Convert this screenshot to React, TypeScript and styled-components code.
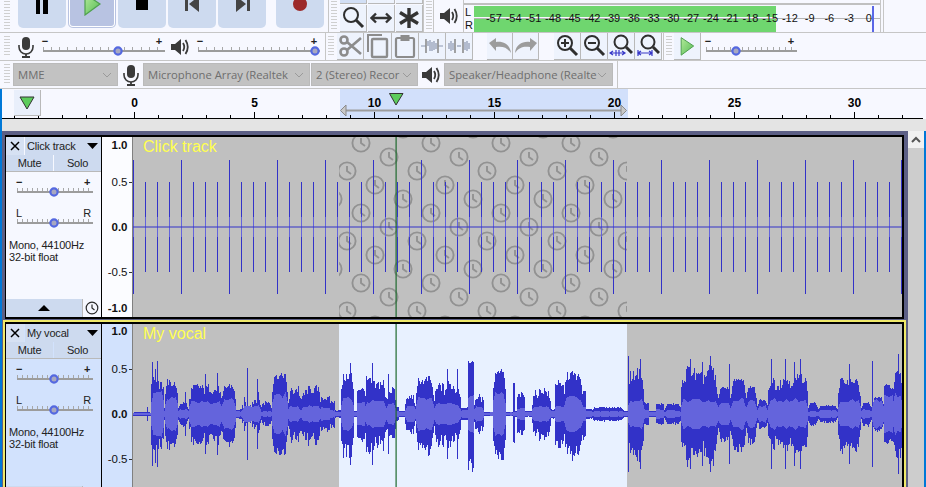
import * as React from 'react'
import styled, { createGlobalStyle } from 'styled-components'

const Global = createGlobalStyle`
	html, body {
		margin: 0;
		height: 487px;
		overflow: hidden;
		background: #f7f8ff;
		font-family: 'Liberation Sans', Arial, sans-serif;
	}
	svg { display: block; }
`

// the screenshot cuts off the top of the window, so the first toolbar row starts above the page
const Shell = styled.div`
	width: 926px;
	height: 507px;
	margin-top: -20px;
	overflow: hidden;
	display: flex;
	flex-direction: column;
`

const ToolRow = styled.div<{ $height: number }>`
	box-sizing: border-box;
	height: ${p => p.$height}px;
	flex: none;
	display: flex;
	align-items: center;
	background: #f7f8ff;
	border-bottom: 1px solid #c6c6c6;
`

const Grip = styled.div<{ $left?: number; $right?: number }>`
	flex: none;
	width: 6px;
	height: 100%;
	margin-left: ${p => p.$left ?? 0}px;
	margin-right: ${p => p.$right ?? 0}px;
	background: repeating-linear-gradient(to bottom, #cfcfcf 0 1px, transparent 1px 3px);
	background-clip: content-box;
	padding: 3px 0;
	box-sizing: border-box;
`

const Divider = styled.div<{ $left?: number }>`
	flex: none;
	width: 1px;
	height: 100%;
	margin-left: ${p => p.$left ?? 0}px;
	background: #c6c6c6;
`

const TransportGroup = styled.div`
	display: flex;
	gap: 2px;
	margin-left: 8px;
	height: 100%;
	padding-bottom: 4px;
	box-sizing: border-box;
`

const TransportButton = styled.div<{ $pressed?: boolean; $gapLeft?: number }>`
	box-sizing: border-box;
	width: 48px;
	height: 48px;
	margin-left: ${p => p.$gapLeft ?? 0}px;
	border-radius: 5px;
	background: ${p => (p.$pressed ? '#b8c3e2' : '#cddaef')};
	box-shadow: ${p => (p.$pressed ? 'inset 0 0 0 1px #b8c3e2, inset 0 0 0 2px #fff' : 'none')};
	display: flex;
	align-items: center;
	justify-content: center;
`

const ToolStack = styled.div`
	align-self: flex-end;
	display: grid;
	grid-template-columns: repeat(3, 27px);
	gap: 1px;
	margin-left: 3px;
	padding-bottom: 0;
`

const IconButton = styled.div<{ $active?: boolean; $width?: number; $left?: number }>`
	box-sizing: border-box;
	width: ${p => p.$width ?? 27}px;
	height: 27px;
	flex: none;
	margin-left: ${p => p.$left ?? 0}px;
	background: ${p => (p.$active ? '#d2dff5' : '#eef3fd')};
	border-right: 1px solid #b9b9b9;
	border-bottom: 1px solid #b9b9b9;
	display: flex;
	align-items: center;
	justify-content: center;
`

const SpeakerCell = styled.div`
	flex: none;
	width: 29px;
	height: 100%;
	padding-top: 20px;
	box-sizing: border-box;
	display: flex;
	align-items: center;
	justify-content: center;
`

const MeterStack = styled.div`
	flex: none;
	width: 416px;
	height: 100%;
	display: flex;
	flex-direction: column;
	justify-content: flex-end;
`

const MeterTopLine = styled.div`
	height: 2px;
	background: #c0c0c0;
	margin-bottom: 1px;
`

const Meter = styled.div`
	position: relative;
	display: flex;
	height: 26px;
	padding-left: 1px;
`

const MeterLetters = styled.div`
	width: 9px;
	flex: none;
	font-size: 11px;
	line-height: 13px;
	color: #111;
`

const MeterBars = styled.div`
	flex: 1;
	display: flex;
	flex-direction: column;
	gap: 2px;
	background: linear-gradient(#0000 12px, #b4b4b4 12px 13px, #0000 13px);
`

const MeterBar = styled.div<{ $height: number }>`
	height: ${p => p.$height}px;
	width: 302px;
	background: #6fd66f;
`

const MeterScale = styled.div`
	position: absolute;
	left: 20px;
	top: 5px;
	display: flex;
	font-size: 11px;
	line-height: 14px;
	color: #111;
`

const MeterTick = styled.span`
	width: 19.74px;
	text-align: center;
	white-space: nowrap;
`

const PeakMark = styled.div`
	position: absolute;
	left: 408px;
	top: 0;
	width: 2px;
	height: 26px;
	background: #5a66e6;
`

const IconCell = styled.div<{ $left: number; $width: number }>`
	flex: none;
	width: ${p => p.$width}px;
	margin-left: ${p => p.$left}px;
	display: flex;
	justify-content: center;
`

const SliderSlot = styled.div<{ $left: number }>`
	flex: none;
	margin-left: ${p => p.$left}px;
`

const Combo = styled.div<{ $width: number; $left?: number }>`
	box-sizing: border-box;
	width: ${p => p.$width}px;
	height: 23px;
	flex: none;
	margin-left: ${p => p.$left ?? 0}px;
	padding: 0 5px 0 4px;
	background: #c2c2c2;
	border: 1px solid #bababa;
	color: #6e6e6e;
	font-family: 'Open Sans', sans-serif;
	font-size: 11.3px;
	display: flex;
	align-items: center;
	justify-content: space-between;
	overflow: hidden;
	white-space: nowrap;
`

const ComboText = styled.span`
	overflow: hidden;
	flex: 1;
`

const Lower = styled.div`
	flex: 1;
	min-height: 0;
	display: flex;
	flex-direction: column;
	border-left: 2px solid #0078d7;
`

const RulerRow = styled.div`
	position: relative;
	height: 30px;
	flex: none;
	width: 921px;
`

const PinButton = styled.div`
	position: absolute;
	left: 12px;
	top: 1px;
	box-sizing: border-box;
	width: 27px;
	height: 26px;
	background: #e9effb;
	border-right: 1px solid #b9b9b9;
	border-bottom: 1px solid #b9b9b9;
	display: flex;
	align-items: center;
	justify-content: center;
`

const GreyBand = styled.div`
	height: 12px;
	flex: none;
	background: #e4e4e4;
`

const TrackArea = styled.div`
	flex: 1;
	min-height: 0;
	display: flex;
	border-right: 2px solid #0078d7;
`

const TrackList = styled.div`
	flex: 1;
	background: #5c5f85;
	padding: 4px 4px 0 3px;
	display: flex;
	flex-direction: column;
	gap: 3px;
	overflow: hidden;
`

const Scrollbar = styled.div`
	width: 16px;
	flex: none;
	background: #cdcdcd;
`

const ScrollArrow = styled.div`
	height: 17px;
	background: #f1f1f1;
	display: flex;
	align-items: center;
	justify-content: center;
`

const Track = styled.div<{ $focused?: boolean }>`
	box-sizing: border-box;
	flex: none;
	height: 184px;
	display: flex;
	border: 2px solid #000;
	border-left-width: 1px;
	box-shadow: ${p => (p.$focused ? '0 0 0 2px #efe96a' : 'none')};
`

const Panel = styled.div<{ $selected?: boolean }>`
	box-sizing: border-box;
	width: 96px;
	flex: none;
	display: flex;
	flex-direction: column;
	background: ${p => (p.$selected ? '#d2e2fd' : '#f6f8ff')};
	border-right: 1px solid #000;
	color: #222;
	font-size: 11px;
	letter-spacing: -0.2px;
`

const TitleBar = styled.div`
	display: flex;
	height: 18px;
	flex: none;
	gap: 1px;
`

const CloseBox = styled.div`
	width: 18px;
	flex: none;
	background: #d6e1f3;
	display: flex;
	align-items: center;
	justify-content: center;
`

const TitleBox = styled.div`
	flex: 1;
	background: #cddaef;
	padding: 0 3px 0 2px;
	display: flex;
	align-items: center;
	justify-content: space-between;
	white-space: nowrap;
`

const MuteRow = styled.div`
	display: flex;
	height: 17px;
	flex: none;
	gap: 1px;
	border-bottom: 1px solid #b9b9b9;
	box-sizing: border-box;
`

const MuteButton = styled.div`
	flex: 1;
	background: #cddaef;
	display: flex;
	align-items: center;
	justify-content: center;
`

const PanelSlider = styled.div`
	margin: 5px 0 0 7px;
`

const TrackInfo = styled.div`
	margin: 5px 0 0 3px;
	line-height: 12px;
`

const PanelFoot = styled.div`
	margin-top: auto;
	height: 18px;
	flex: none;
	display: flex;
`

const CollapseBar = styled.div`
	width: 76px;
	background: #cddaef;
	border-right: 1px solid #b9b9b9;
	display: flex;
	align-items: center;
	justify-content: center;
`

const SyncCell = styled.div`
	flex: 1;
	display: flex;
	align-items: center;
	justify-content: center;
`

const WaveBox = styled.div`
	position: relative;
	flex: 1;
	border-left: 1px solid #808080;
	background: #c0c0c0;
	overflow: hidden;
`

const WaveTitle = styled.div`
	position: absolute;
	left: 10px;
	top: 1px;
	font-size: 16px;
	line-height: 18px;
	color: #ffff50;
`

const VRulerBox = styled.div<{ $selected?: boolean }>`
	width: 30px;
	flex: none;
	background: ${p => (p.$selected ? '#d2e2fd' : '#fbfcff')};
`

const DARK = '#3a3a3a'
const GREY = '#8c8c8c'

const Pause = () => (
	<svg width='24' height='24' viewBox='0 0 24 24'>
		<rect x='6' y='3' width='4' height='19' fill='#000' />
		<rect x='13' y='3' width='5' height='19' fill='#000' />
	</svg>
)
const PlayIcon = ({ size = 24 }: { size?: number }) => (
	<svg width={size} height={size} viewBox='0 0 24 24'>
		<defs>
			<linearGradient id='pl' x1='0' y1='0' x2='1' y2='1'>
				<stop offset='0' stopColor='#b4eb9a' />
				<stop offset='1' stopColor='#55bb55' />
			</linearGradient>
		</defs>
		<path d='M5 2 L20 12 L5 23 Z' fill='url(#pl)' stroke='#4fa04f' strokeWidth='1.2' />
	</svg>
)
const Stop = () => (
	<svg width='24' height='24' viewBox='0 0 24 24'>
		<rect x='6' y='6' width='12' height='12' fill='#000' />
	</svg>
)
const SkipStart = () => (
	<svg width='24' height='24' viewBox='0 0 24 24'>
		<rect x='5' y='5' width='3' height='14' fill='#444' />
		<path d='M19 4 L9 12 L19 20 Z' fill='#444' />
	</svg>
)
const SkipEnd = () => (
	<svg width='24' height='24' viewBox='0 0 24 24'>
		<rect x='17' y='5' width='3' height='14' fill='#444' />
		<path d='M6 4 L16 12 L6 20 Z' fill='#444' />
	</svg>
)
const Record = () => (
	<svg width='24' height='24' viewBox='0 0 24 24'>
		<circle cx='12' cy='12' r='7' fill='#9c2a2a' />
	</svg>
)
const Speaker = () => (
	<svg width='20' height='20' viewBox='0 0 20 20'>
		<path d='M1 7 H5 L11 2 V18 L5 13 H1 Z' fill={DARK} />
		<path d='M13 6 Q15.5 10 13 14' fill='none' stroke={DARK} strokeWidth='1.8' />
		<path d='M15.5 3 Q20 10 15.5 17' fill='none' stroke={DARK} strokeWidth='1.8' />
	</svg>
)
const Mic = () => (
	<svg width='18' height='22' viewBox='0 0 18 22'>
		<rect x='5' y='1' width='8' height='13' rx='4' fill={DARK} />
		<path d='M2 9 V11 A7 7 0 0 0 16 11 V9' fill='none' stroke={DARK} strokeWidth='1.6' />
		<path d='M9 18 V21 M5 21 H13' stroke={DARK} strokeWidth='1.8' />
	</svg>
)
const Lens = ({ sign }: { sign?: '+' | '-' }) => (
	<svg width='24' height='24' viewBox='0 0 24 24' fill='none' stroke='#2f2f2f'>
		<circle cx='10' cy='9' r='7' strokeWidth='2' />
		<path d='M15 14 L22 21' strokeWidth='3' />
		{sign && <path d='M6 9 H14' strokeWidth='2' />}
		{sign === '+' && <path d='M10 5 V13' strokeWidth='2' />}
	</svg>
)
const FitLens = ({ wide }: { wide?: boolean }) => (
	<svg width='24' height='24' viewBox='0 0 24 24' fill='none'>
		<circle cx='12' cy='8' r='6.5' stroke='#2f2f2f' strokeWidth='2' />
		<path d='M17 13 L23 19' stroke='#2f2f2f' strokeWidth='3' />
		{wide ? (
			<path d='M2 19 H16 M2 16 V22 M16 16 V22 M5 17 L2 19 L5 21 M13 17 L16 19 L13 21' stroke='#3838c8' strokeWidth='1.2' />
		) : (
			<path d='M1 19 H16 M7 16 V22 M10 16 V22 M4 17 L1 19 L4 21 M13 17 L16 19 L13 21' stroke='#3838c8' strokeWidth='1.2' />
		)}
	</svg>
)
const Cut = () => (
	<svg width='24' height='24' viewBox='0 0 24 24' fill='none' stroke={GREY} strokeWidth='2.6'>
		<circle cx='6' cy='6' r='3.5' />
		<circle cx='6' cy='18' r='3.5' />
		<path d='M9 8 L23 20 M9 16 L23 4' />
	</svg>
)
const Copy = () => (
	<svg width='24' height='26' viewBox='0 0 24 26' fill='none' stroke={GREY} strokeWidth='2'>
		<path d='M2 19 V2 H16' />
		<rect x='6' y='6' width='15' height='18' rx='1' strokeWidth='2.4' />
	</svg>
)
const Paste = () => (
	<svg width='22' height='24' viewBox='0 0 22 24' fill='none' stroke={GREY} strokeWidth='2.2'>
		<rect x='2' y='4' width='18' height='19' rx='1.5' />
		<rect x='7' y='1.5' width='8' height='5' fill={GREY} strokeWidth='1' />
	</svg>
)
const Trim = () => (
	<svg width='22' height='18' viewBox='0 0 22 18' fill='none' stroke='#8c97b0' strokeWidth='1.2'>
		<path d='M0 9 H5 M17 9 H22' />
		<path d='M5 2 V16 M17 2 V16' strokeWidth='1.6' stroke={GREY} />
		<path d='M7 9 V4 M9 9 V14 M9 9 V3 M11 5 V14 M13 4 V13 M15 6 V12' />
	</svg>
)
const Silence = () => (
	<svg width='22' height='18' viewBox='0 0 22 18' fill='none' stroke='#8c97b0' strokeWidth='1.2'>
		<path d='M9 9 H13' />
		<path d='M7 2 V16 M15 2 V16' strokeWidth='1.6' stroke={GREY} />
		<path d='M1 6 V12 M3 4 V14 M5 6 V13 M17 5 V13 M19 4 V14 M21 6 V12' />
	</svg>
)
const Undo = ({ flip }: { flip?: boolean }) => (
	<svg width='24' height='16' viewBox='0 0 24 16' style={flip ? { transform: 'scaleX(-1)' } : undefined}>
		<path d='M1 5 L8 0 V4 C15 3 22 6 23 15 C19 9 14 8 8 9 V13 Z' fill='#9c9c9c' />
	</svg>
)
const Chevron = () => (
	<svg width='10' height='6' viewBox='0 0 10 6' fill='none' stroke='#9a9a9a'>
		<path d='M1 1 L5 5 L9 1' />
	</svg>
)
const Clock = ({ size = 14 }: { size?: number }) => (
	<svg width={size} height={size} viewBox='0 0 14 14' fill='none' stroke='#2a2a2a' strokeWidth='1.2'>
		<circle cx='7' cy='7' r='5.8' />
		<path d='M7 3.5 V7 L9.5 9' />
	</svg>
)

const Slider = ({
	width,
	at,
	left,
	right,
	height = 26,
	base = 14,
	weight = 700,
}: {
	width: number
	at: number
	left: string
	right: string
	height?: number
	base?: number
	weight?: number
}) => {
	const ticks = []
	for (let x = 0; x <= width - 1; x += width / 15) ticks.push(Math.round(x) + 0.5)
	return (
		<svg width={width + 8} height={height} viewBox={`-4 0 ${width + 8} ${height}`}>
			<text x={2} y={base - 5} fontSize='11' fontWeight={weight} fill='#222' textAnchor='middle'>
				{left}
			</text>
			<text x={width - 6} y={base - 5} fontSize='11' fontWeight={weight} fill='#222' textAnchor='middle'>
				{right}
			</text>
			<path d={ticks.map(x => `M${x} ${base - 3}V${base}`).join('')} stroke='#a8a8a8' />
			<rect x={0} y={base} width={width} height={2} fill='#9c9c9c' />
			<circle cx={at} cy={base + 1} r={3.6} fill='#a8a8c0' stroke='#5468e0' strokeWidth='2.2' />
		</svg>
	)
}

const METER_LABELS = [-57, -54, -51, -48, -45, -42, -39, -36, -33, -30, -27, -24, -21, -18, -15, -12, -9, -6, -3, 0]

const TimeRuler = () => {
	const ticks: string[] = []
	const labels = []
	for (let x = 14; x < 923; x += 24) {
		const major = (x - 14) % 120 === 0
		ticks.push(`M${x + 0.5} ${major ? 112 : 115}V118`)
		if (major && x >= 134) {
			labels.push(
				<text key={x} x={x + 0.5} y={107} textAnchor='middle' fontSize='12' fontWeight='700' fill='#000'>
					{(x - 134) / 24}
				</text>
			)
		}
	}
	return (
		<svg width='921' height='30' viewBox='2 89 921 30'>
			<rect x='2' y='89' width='921' height='30' fill='#f7f8ff' />
			<rect x='340' y='89' width='288' height='29' fill='#d2e0fb' />
			<path d={ticks.join('')} stroke='#000' />
			{labels}
			<rect x='346' y='109.5' width='275' height='2' fill='#9c9c9c' />
			<path d='M340.5 110.5 L346 105 V116 Z M626.5 110.5 L621 105 V116 Z' fill='#c8c8c8' stroke='#8a8a8a' />
			<path d='M389.5 93.5 H403 L396 105 Z' fill='#5ccc5c' stroke='#333' />
			<rect x='2' y='118' width='921' height='1.5' fill='#000' />
		</svg>
	)
}

const VRuler = ({ marks, top, height }: { marks: [number, string, boolean][]; top: number; height: number }) => (
	<svg width='30' height={height} viewBox={`102 ${top} 30 ${height}`}>
		{marks.map(([y, label, bold]) => (
			<g key={label}>
				<text x='127.5' y={y + 4} textAnchor='end' fontSize='11.5' fontWeight={bold ? 700 : 400} fill='#111'>
					{label}
				</text>
				{!bold && <path d={`M129 ${y + 0.5}H132`} stroke='#333' />}
			</g>
		))}
	</svg>
)

const BLUE = '#3232c8'
const RMS = '#6464dc'
const noise = (x: number, seed: number) => {
	const v = Math.sin(x * 12.9898 + seed * 78.233) * 43758.5453
	return v - Math.floor(v)
}
// value noise, so that neighbouring columns rise and fall together
const smooth = (x: number, span: number, seed: number) => {
	const i = Math.floor(x / span)
	const t = x / span - i
	return noise(i, seed) * (1 - t) + noise(i + 1, seed) * t
}

const ClickWave = () => {
	const minor: string[] = []
	const light: string[] = []
	for (let k = 0; 133.5 + 12 * k < 902; k++) {
		const x = 133.5 + 12 * k
		const amp = k % 4 === 0 ? 67 : 45
		minor.push(`M${x} ${227 - amp}V${227 + amp}`)
		light.push(`M${x} 217V237`)
	}
	const clock = (x: number, y: number) => (
		<g key={`${x}-${y}`} transform={`translate(${x} ${y})`}>
			<circle r='8.6' />
			<path d='M0 -5 V0 L4 3' />
		</g>
	)
	return (
		<svg width='770' height='180' viewBox='133 137 770 180'>
			<defs>
				<pattern id='sync' x='333' y='129' width='70' height='70' patternUnits='userSpaceOnUse'>
					<g fill='none' stroke='#929292' strokeWidth='1.9'>
						{clock(0, 0)}
						{clock(70, 0)}
						{clock(0, 70)}
						{clock(70, 70)}
						{clock(28, 14)}
						{clock(56, 28)}
						{clock(14, 42)}
						{clock(42, 56)}
					</g>
				</pattern>
			</defs>
			<rect x='339' y='137' width='288' height='180' fill='url(#sync)' />
			<path d={minor.join('')} stroke={BLUE} />
			<path d={light.join('')} stroke={RMS} />
			<rect x='133' y='226.5' width='770' height='1' fill={BLUE} />
			<rect x='395.5' y='137' width='1.2' height='180' fill='#1e6a2e' />
		</svg>
	)
}

// x from, x to, peak, rms, roughness: envelope read off the recording
const SEGMENTS: number[][] = [
	[133, 150, 2, 1, 0], [151, 163, 50, 22, 0.55], [164, 164, 6, 3, 0], [165, 177, 37, 17, 0.3],
	[178, 188, 13, 5, 0.55], [189, 221, 31, 12, 0.45], [222, 235, 33, 15, 0.4], [236, 241, 5, 3, 0.2],
	[242, 260, 22, 8, 0.75], [261, 271, 14, 3, 0.6], [272, 287, 42, 20, 0.25], [288, 300, 34, 8, 0.55],
	[301, 320, 28, 8, 0.5], [321, 329, 20, 7, 0.4], [330, 334, 14, 4, 0.3], [335, 340, 4, 2, 0.2],
	[341, 353, 44, 17, 0.3], [354, 356, 3, 2, 0], [357, 364, 28, 12, 0.25], [365, 385, 40, 13, 0.5],
	[386, 395, 32, 10, 0.55], [396, 398, 7, 3, 0.2], [399, 404, 3, 2, 0], [405, 415, 20, 8, 0.5],
	[416, 433, 40, 16, 0.35], [434, 460, 36, 10, 0.55], [461, 467, 7, 4, 0.2], [468, 473, 55, 18, 0.1],
	[474, 483, 26, 8, 0.6], [484, 492, 2, 1.5, 0], [493, 505, 45, 22, 0.15], [506, 512, 2, 1.5, 0],
	[513, 514, 31, 2, 0], [515, 516, 3, 2, 0], [517, 524, 24, 6, 0.5], [525, 531, 3, 2, 0.2],
	[532, 550, 28, 8, 0.5], [551, 554, 5, 3, 0.2], [555, 563, 36, 8, 0.4], [564, 582, 46, 17, 0.35],
	[583, 585, 24, 8, 0.3], [586, 591, 5, 3, 0.2], [592, 623, 7, 3, 0.15], [624, 627, 3, 2, 0],
	[628, 643, 48, 15, 0.4], [644, 648, 12, 5, 0.3], [649, 655, 3, 2, 0], [656, 663, 12, 5, 0.3],
	[664, 664, 4, 2, 0], [665, 680, 11, 4, 0.2], [681, 717, 50, 14, 0.5], [718, 730, 28, 12, 0.15],
	[731, 745, 36, 16, 0.12], [746, 756, 28, 14, 0.12], [757, 767, 15, 8, 0.2], [768, 807, 46, 15, 0.5],
	[808, 817, 12, 3, 0.2], [818, 837, 9, 4, 0.2], [838, 860, 36, 14, 0.3], [861, 871, 12, 5, 0.3],
	[872, 883, 17, 14, 0.1], [884, 892, 32, 20, 0.25], [893, 902, 44, 21, 0.2],
]
const SPIKES: Record<number, number> = {
	147: 7, 152: 52, 157: 53, 185: 22, 205: 40, 217: 41, 247: 46, 257: 35, 350: 51, 366: 38, 372: 51, 388: 40,
	447: 45, 457: 45, 640: 55, 628: 58, 690: 55, 702: 52, 710: 58, 729: 50, 771: 55, 785: 55, 794: 52, 800: 55,
	849: 50, 872: 53, 898: 60,
}

const VocalWave = () => {
	const peak: string[] = []
	const rms: string[] = []
	SEGMENTS.forEach(([from, to, p, r, rough]) => {
		for (let x = from; x <= to; x++) {
			const edge = to - from > 8 ? Math.min(1, 0.6 + Math.min(x - from, to - x) / 5) : 1
			const shape = 0.45 * smooth(x, 4, 5) + 0.55 * noise(x, 1)
			const spike = SPIKES[x]
			const top = spike ?? Math.max(p * edge * (1 - rough + rough * 1.1 * shape), 1.5)
			const bottom = spike ?? Math.max(top * (0.88 + 0.24 * noise(x, 2)), 1.5)
			const inner = Math.max(r * edge * (0.8 + 0.3 * smooth(x, 3, 3)), 1)
			peak.push(`M${x + 0.5} ${Math.round(414 - top)}V${Math.round(414 + bottom)}`)
			rms.push(`M${x + 0.5} ${Math.round(414 - inner)}V${Math.round(414 + inner)}`)
		}
	})
	return (
		<svg width='770' height='180' viewBox='133 324 770 180'>
			<rect x='339' y='324' width='288' height='180' fill='#e8f1ff' />
			<path d={peak.join('')} stroke={BLUE} shapeRendering='crispEdges' />
			<path d={rms.join('')} stroke={RMS} shapeRendering='crispEdges' />
			<rect x='395.5' y='324' width='1.2' height='180' fill='#1e6a2e' />
		</svg>
	)
}

const TrackRow = ({
	name,
	selected,
	focused,
	marks,
	top,
	children,
}: {
	name: string
	selected?: boolean
	focused?: boolean
	marks: [number, string, boolean][]
	top: number
	children: React.ReactNode
}) => (
	<Track $focused={focused}>
		<Panel $selected={selected}>
			<TitleBar>
				<CloseBox>
					<svg width='10' height='10' viewBox='0 0 10 10' stroke='#000' strokeWidth='1.5'>
						<path d='M1 1 L9 9 M9 1 L1 9' />
					</svg>
				</CloseBox>
				<TitleBox>
					{name}
					<svg width='11' height='6' viewBox='0 0 11 6'>
						<path d='M0 0 H11 L5.5 6 Z' fill='#000' />
					</svg>
				</TitleBox>
			</TitleBar>
			<MuteRow>
				<MuteButton>Mute</MuteButton>
				<MuteButton>Solo</MuteButton>
			</MuteRow>
			<PanelSlider>
				<Slider width={76} at={37} left='−' right='+' />
			</PanelSlider>
			<PanelSlider>
				<Slider width={76} at={37} left='L' right='R' weight={400} />
			</PanelSlider>
			<TrackInfo>
				Mono, 44100Hz
				<br />
				32-bit float
			</TrackInfo>
			<PanelFoot>
				<CollapseBar>
					<svg width='12' height='6' viewBox='0 0 12 6'>
						<path d='M0 6 H12 L6 0 Z' fill='#000' />
					</svg>
				</CollapseBar>
				<SyncCell>
					<Clock />
				</SyncCell>
			</PanelFoot>
		</Panel>
		<VRulerBox $selected={selected}>
			<VRuler marks={marks} top={top} height={180} />
		</VRulerBox>
		<WaveBox>
			{children}
			<WaveTitle>{name}</WaveTitle>
		</WaveBox>
	</Track>
)

const App = () => (
	<Shell>
		<Global />
		<ToolRow $height={53}>
			<Grip $left={4} />
			<TransportGroup>
				<TransportButton>
					<Pause />
				</TransportButton>
				<TransportButton $pressed>
					<PlayIcon />
				</TransportButton>
				<TransportButton>
					<Stop />
				</TransportButton>
				<TransportButton>
					<SkipStart />
				</TransportButton>
				<TransportButton>
					<SkipEnd />
				</TransportButton>
				<TransportButton $gapLeft={8}>
					<Record />
				</TransportButton>
			</TransportGroup>
			<Divider $left={4} />
			<Grip $left={2} />
			<ToolStack>
				<IconButton $active />
				<IconButton />
				<IconButton />
				<IconButton>
					<Lens />
				</IconButton>
				<IconButton>
					<svg width='22' height='12' viewBox='0 0 22 12' fill='none' stroke='#333' strokeWidth='2.4'>
						<path d='M2 6 H20 M6 1.5 L1.5 6 L6 10.5 M16 1.5 L20.5 6 L16 10.5' />
					</svg>
				</IconButton>
				<IconButton>
					<svg width='22' height='22' viewBox='0 0 22 22' stroke='#333' strokeWidth='3.4'>
						<path d='M11 1 V21 M2 5.5 L20 16.5 M20 5.5 L2 16.5' />
					</svg>
				</IconButton>
			</ToolStack>
			<Divider />
			<Grip $left={2} $right={1} />
			<Divider />
			<SpeakerCell>
				<Speaker />
			</SpeakerCell>
			<Divider />
			<MeterStack>
				<MeterTopLine />
				<Meter>
					<MeterLetters>
						L
						<br />R
					</MeterLetters>
					<MeterBars>
						<MeterBar $height={11} />
						<MeterBar $height={13} />
					</MeterBars>
					<MeterScale>
						{METER_LABELS.map(v => (
							<MeterTick key={v}>{v}</MeterTick>
						))}
					</MeterScale>
					<PeakMark />
				</Meter>
			</MeterStack>
			<Divider />
			<Divider $left={2} />
		</ToolRow>
		<ToolRow $height={28}>
			<Grip $left={4} />
			<IconCell $left={7} $width={18}>
				<Mic />
			</IconCell>
			<SliderSlot $left={4}>
				<Slider width={122} at={75} left='−' right='+' height={27} base={17} />
			</SliderSlot>
			<IconCell $left={1} $width={20}>
				<Speaker />
			</IconCell>
			<SliderSlot $left={4}>
				<Slider width={122} at={117} left='−' right='+' height={27} base={17} />
			</SliderSlot>
			<Divider $left={1} />
			<Grip $left={2} $right={3} />
			<IconButton>
				<Cut />
			</IconButton>
			<IconButton $width={28}>
				<Copy />
			</IconButton>
			<IconButton>
				<Paste />
			</IconButton>
			<IconButton>
				<Trim />
			</IconButton>
			<IconButton>
				<Silence />
			</IconButton>
			<IconButton $left={14} $width={26}>
				<Undo />
			</IconButton>
			<IconButton $width={26}>
				<Undo flip />
			</IconButton>
			<IconButton $left={15}>
				<Lens sign='+' />
			</IconButton>
			<IconButton>
				<Lens sign='-' />
			</IconButton>
			<IconButton>
				<FitLens />
			</IconButton>
			<IconButton>
				<FitLens wide />
			</IconButton>
			<Divider $left={1} />
			<Grip $left={2} $right={2} />
			<IconButton>
				<PlayIcon size={20} />
			</IconButton>
			<SliderSlot $left={1}>
				<Slider width={91} at={30} left='−' right='+' height={27} base={17} />
			</SliderSlot>
		</ToolRow>
		<ToolRow $height={28}>
			<Grip $left={4} $right={3} />
			<Combo $width={105}>
				<ComboText>MME</ComboText>
				<Chevron />
			</Combo>
			<IconCell $left={4} $width={18}>
				<Mic />
			</IconCell>
			<Combo $width={167} $left={3}>
				<ComboText>Microphone Array (Realtek</ComboText>
				<Chevron />
			</Combo>
			<Combo $width={107} $left={1}>
				<ComboText>2 (Stereo) Recor</ComboText>
				<Chevron />
			</Combo>
			<IconCell $left={3} $width={20}>
				<Speaker />
			</IconCell>
			<Combo $width={169} $left={3}>
				<ComboText>Speaker/Headphone (Realte</ComboText>
				<Chevron />
			</Combo>
			<Divider $left={4} />
		</ToolRow>
		<Lower>
			<RulerRow>
				<TimeRuler />
				<PinButton>
					<svg width='16' height='14' viewBox='0 0 16 14'>
						<path d='M1 1 H15 L8 13 Z' fill='#5ccc5c' stroke='#333' />
					</svg>
				</PinButton>
			</RulerRow>
			<GreyBand />
			<TrackArea>
				<TrackList>
					<TrackRow
						name='Click track'
						top={137}
						marks={[
							[145, '1.0', true],
							[182, '0.5', false],
							[227, '0.0', true],
							[272, '-0.5', false],
							[308, '-1.0', true],
						]}
					>
						<ClickWave />
					</TrackRow>
					<TrackRow
						name='My vocal'
						selected
						focused
						top={324}
						marks={[
							[331, '1.0', true],
							[369, '0.5', false],
							[414, '0.0', true],
							[459, '-0.5', false],
						]}
					>
						<VocalWave />
					</TrackRow>
				</TrackList>
				<Scrollbar>
					<ScrollArrow>
						<svg width='10' height='7' viewBox='0 0 10 7' fill='none' stroke='#555' strokeWidth='2'>
							<path d='M1 6 L5 2 L9 6' />
						</svg>
					</ScrollArrow>
				</Scrollbar>
			</TrackArea>
		</Lower>
	</Shell>
)

export default App
